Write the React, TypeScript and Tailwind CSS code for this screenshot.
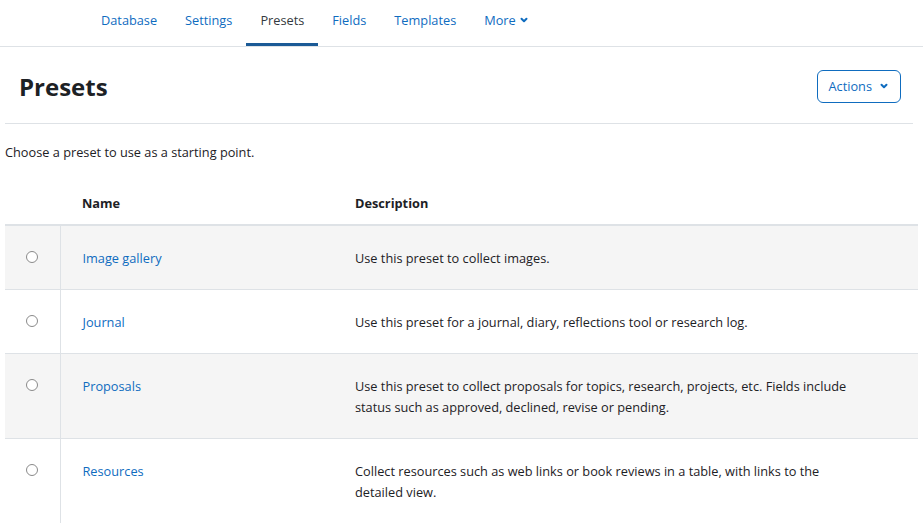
import React from 'react';

const presets = [
  { name: 'Image gallery', desc: ['Use this preset to collect images.'] },
  { name: 'Journal', desc: ['Use this preset for a journal, diary, reflections tool or research log.'] },
  {
    name: 'Proposals',
    desc: ['Use this preset to collect proposals for topics, research, projects, etc. Fields include', 'status such as approved, declined, revise or pending.'],
  },
  {
    name: 'Resources',
    desc: ['Collect resources such as web links or book reviews in a table, with links to the', 'detailed view.'],
  },
];

const tabs = ['Database', 'Settings', 'Presets', 'Fields', 'Templates'];

const Chevron = ({ className = '' }: { className?: string }) => (
  <svg viewBox="0 0 10 10" className={className} fill="none" stroke="currentColor" strokeWidth="2" strokeLinecap="round" strokeLinejoin="round">
    <path d="M2.5 3.8 5 6.3l2.5-2.5" />
  </svg>
);

export default function App() {
  return (
    <div className="w-[923px] h-[523px] overflow-hidden bg-white text-[#1d2125] text-[12.75px] leading-[21px]" style={{ fontFamily: '"Open Sans", sans-serif' }}>
      <nav className="h-[47px] border-b border-[#dee2e6] flex items-stretch pl-[87px]">
        {tabs.map((t) => (
          <div
            key={t}
            className={`px-[14px] pb-[3px] flex items-center border-b-[3px] ${t === 'Presets' ? 'border-[#1b5a96] text-[#343a40]' : 'border-transparent text-[#0f6cbf]'}`}
          >
            {t}
          </div>
        ))}
        <div className="px-[14px] pb-[3px] flex items-center gap-[3px] text-[#0f6cbf] border-b-[3px] border-transparent">
          More
          <Chevron className="w-[10px] h-[10px]" />
        </div>
      </nav>

      <div className="flex items-center justify-between pl-[14px] pr-[12px] h-[77px] ml-[5px] mr-[10px] border-b border-[#dee2e6]">
        <h2 className="text-[24px] font-bold leading-none pt-[4px]">Presets</h2>
        <button className="h-[33px] px-[11px] mt-[2px] border border-[#0f6cbf] rounded-[6px] text-[#0f6cbf] flex items-center gap-[7px]">
          Actions
          <Chevron className="w-[10px] h-[10px]" />
        </button>
      </div>

      <p className="px-[5px] pt-[18px]">Choose a preset to use as a starting point.</p>

      <table className="mt-[20px] ml-[5px] w-[913px] border-collapse text-left">
        <thead>
          <tr className="h-[42px] border-b-2 border-[#dee2e6]">
            <th className="w-[55px]"></th>
            <th className="w-[273px] pl-[22px] font-bold">Name</th>
            <th className="pl-[22px] font-bold">Description</th>
          </tr>
        </thead>
        <tbody>
          {presets.map((p, i) => (
            <tr key={p.name} className={`border-b border-[#dee2e6] align-top ${i % 2 === 0 ? 'bg-[#f5f5f5]' : 'bg-white'}`}>
              <td className="border-r border-[#dee2e6] pt-[22px] pb-[20px] text-center">
                <span className="inline-block mt-[3px] w-[12px] h-[12px] rounded-full border border-[#8a8a8a] bg-white" />
              </td>
              <td className="pl-[22px] pt-[22px] pb-[20px] text-[#0f6cbf]">{p.name}</td>
              <td className="pl-[22px] pt-[22px] pb-[20px] pr-[40px]">
                {p.desc.map((l) => (
                  <div key={l}>{l}</div>
                ))}
              </td>
            </tr>
          ))}
        </tbody>
      </table>
    </div>
  );
}
